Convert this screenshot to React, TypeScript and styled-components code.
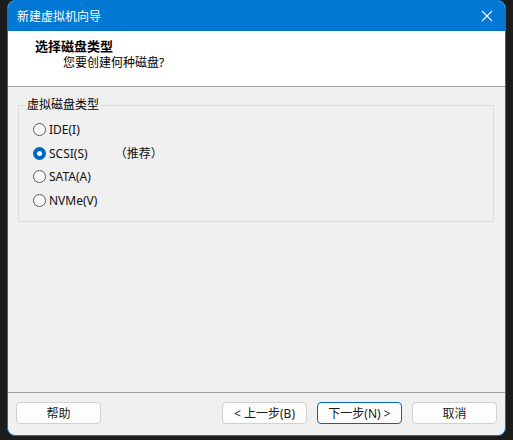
import React from "react";
import styled, { createGlobalStyle } from "styled-components";

const Global = createGlobalStyle`
  html, body {
    margin: 0;
    padding: 0;
    background: #1c1c1c;
  }
  body {
    font-family: "Noto Sans", "Noto Sans CJK SC", sans-serif;
    font-size: 12px;
    color: #000;
  }
`;

const Screen = styled.div`
  width: 513px;
  height: 440px;
  padding-left: 7px;
  box-sizing: border-box;
`;

const Window = styled.div`
  width: 499px;
  height: 436px;
  box-sizing: border-box;
  border: 1px solid #0078d4;
  border-radius: 8px;
  overflow: hidden;
  background: #f0f0f0;
  display: flex;
  flex-direction: column;
`;

const TitleBar = styled.div`
  height: 30px;
  flex: none;
  background: #0078d4;
  color: #fff;
  display: flex;
  align-items: center;
  justify-content: space-between;
  padding: 0 9px 0 9px;
  font-size: 12px;
`;

const CloseButton = styled.div`
  width: 30px;
  height: 30px;
  display: flex;
  align-items: center;
  justify-content: center;
  margin-right: -6px;
`;

const Header = styled.div`
  height: 56px;
  flex: none;
  background: #fff;
  border-bottom: 1px solid #a0a0a0;
  padding: 7px 0 0 27px;
  box-sizing: border-box;
`;

const HeaderTitle = styled.div`
  font-weight: bold;
  font-size: 13px;
  line-height: 17px;
`;

const HeaderSub = styled.div`
  font-size: 12px;
  line-height: 16px;
  padding-left: 28px;
`;

const Body = styled.div`
  flex: 1;
  padding: 10px 11px 0 10px;
`;

const Group = styled.fieldset`
  margin: 0;
  border: 1px solid #dcdcdc;
  padding: 5px 0 9px 14px;
  display: flex;
  flex-direction: column;
`;

const Legend = styled.legend`
  padding: 0 2px;
  margin-left: -8px;
  font-size: 12px;
  line-height: 16px;
`;

const Option = styled.label`
  display: flex;
  align-items: center;
  height: 23.5px;
  font-size: 12px;
  color: #111;
`;

const Radio = styled.span<{ $checked?: boolean }>`
  width: 13px;
  height: 13px;
  box-sizing: border-box;
  border-radius: 50%;
  margin-right: 3px;
  flex: none;
  border: ${(p) => (p.$checked ? "none" : "1px solid #5a5a5a")};
  background: ${(p) => (p.$checked ? "#0067c0" : "#f8f8f8")};
  display: flex;
  align-items: center;
  justify-content: center;
  &::after {
    content: "";
    display: ${(p) => (p.$checked ? "block" : "none")};
    width: 5px;
    height: 5px;
    border-radius: 50%;
    background: #fff;
  }
`;

const Note = styled.span`
  margin-left: 27px;
`;

const Footer = styled.div`
  flex: none;
  border-top: 1px solid #a0a0a0;
  padding: 9px 8px 11px 8px;
  display: flex;
  align-items: center;
`;

const Button = styled.div<{ $primary?: boolean }>`
  width: 85px;
  height: 22px;
  box-sizing: border-box;
  border: 1px solid ${(p) => (p.$primary ? "#0067c0" : "#d0d0d0")};
  border-radius: 4px;
  background: #fdfdfd;
  display: flex;
  align-items: center;
  justify-content: center;
  font-size: 12px;
  color: #1a1a1a;
`;

const Spacer = styled.div`
  flex: 1;
`;

const ButtonGap = styled.div`
  width: 10px;
`;

const options = [
  { label: "IDE(I)", checked: false },
  { label: "SCSI(S)", checked: true, note: "（推荐）" },
  { label: "SATA(A)", checked: false },
  { label: "NVMe(V)", checked: false },
];

const App = () => {
  return (
    <Screen>
      <Global />
      <Window>
        <TitleBar>
          <span>新建虚拟机向导</span>
          <CloseButton>
            <svg width="12" height="12" viewBox="0 0 12 12">
              <path d="M1 1 L11 11 M11 1 L1 11" stroke="#fff" strokeWidth="1.1" />
            </svg>
          </CloseButton>
        </TitleBar>
        <Header>
          <HeaderTitle>选择磁盘类型</HeaderTitle>
          <HeaderSub>您要创建何种磁盘?</HeaderSub>
        </Header>
        <Body>
          <Group>
            <Legend>虚拟磁盘类型</Legend>
            {options.map((o) => (
              <Option key={o.label}>
                <Radio $checked={o.checked} />
                {o.label}
                {o.note && <Note>{o.note}</Note>}
              </Option>
            ))}
          </Group>
        </Body>
        <Footer>
          <Button>帮助</Button>
          <Spacer />
          <Button>&lt; 上一步(B)</Button>
          <ButtonGap />
          <Button $primary>下一步(N) &gt;</Button>
          <ButtonGap />
          <Button>取消</Button>
        </Footer>
      </Window>
    </Screen>
  );
};

export default App;
